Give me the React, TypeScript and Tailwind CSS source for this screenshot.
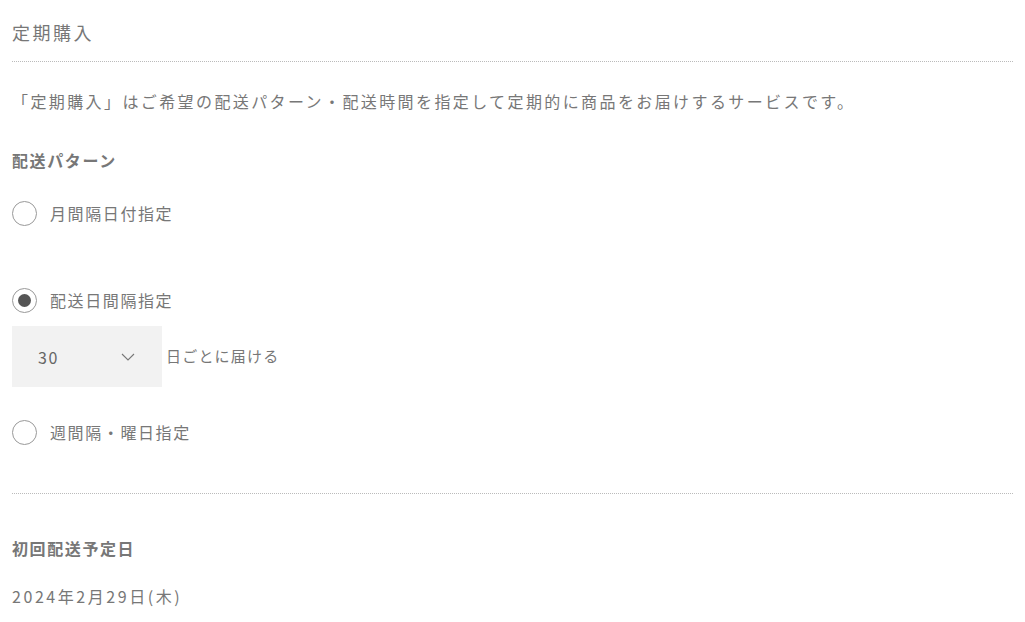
const jp = "font-['Noto_Sans_CJK_JP','Noto_Sans',sans-serif]";

function Radio({ label, checked = false }: { label: string; checked?: boolean }) {
  return (
    <label className="flex h-6 items-center gap-[13px]">
      <span className="flex h-[25px] w-[25px] items-center justify-center rounded-full border border-[#999] bg-white">
        {checked && <span className="h-[13px] w-[13px] rounded-full bg-[#555]" />}
      </span>
      <span className="text-[16px] leading-6 tracking-[0.1em] text-[#777]">{label}</span>
    </label>
  );
}

export default function App() {
  return (
    <div className={`${jp} min-h-screen bg-white px-3 pt-5 text-[#777]`}>
      <h2 className="border-b border-dotted border-[#bbb] pb-[17px] text-[18px] leading-6 tracking-[0.14em] text-[#777]">
        定期購入
      </h2>

      <p className="mt-[27px] text-[16px] leading-6 tracking-[0.15em] text-[#777]">
        「定期購入」はご希望の配送パターン・配送時間を指定して定期的に商品をお届けするサービスです。
      </p>

      <h3 className="mt-[35px] text-[16px] font-bold leading-6 tracking-[0.1em] text-[#777]">配送パターン</h3>

      <div className="mt-[29px]">
        <Radio label="月間隔日付指定" />
      </div>

      <div className="mt-[63px]">
        <Radio label="配送日間隔指定" checked />
      </div>

      <div className="mt-[14px] flex items-center gap-1">
        <div className="flex h-[61px] w-[150px] items-center justify-between bg-[#f2f2f2] pl-[26px] pr-[27px]">
          <span className="text-[16px] tracking-[0.1em] text-[#666]">30</span>
          <svg width="14" height="8" viewBox="0 0 14 8" fill="none">
            <polyline points="1,1 7,7 13,1" stroke="#777" strokeWidth="1.1" />
          </svg>
        </div>
        <span className="text-[15px] tracking-[0.08em] text-[#777]">日ごとに届ける</span>
      </div>

      <div className="mt-[33px]">
        <Radio label="週間隔・曜日指定" />
      </div>

      <div className="mt-[49px] border-t border-dotted border-[#bbb]" />

      <h3 className="mt-[42px] text-[16px] font-bold leading-6 tracking-[0.1em] text-[#777]">初回配送予定日</h3>

      <p className="mt-6 text-[16px] leading-6 tracking-[0.16em] text-[#777]">2024年2月29日(木)</p>
    </div>
  );
}
